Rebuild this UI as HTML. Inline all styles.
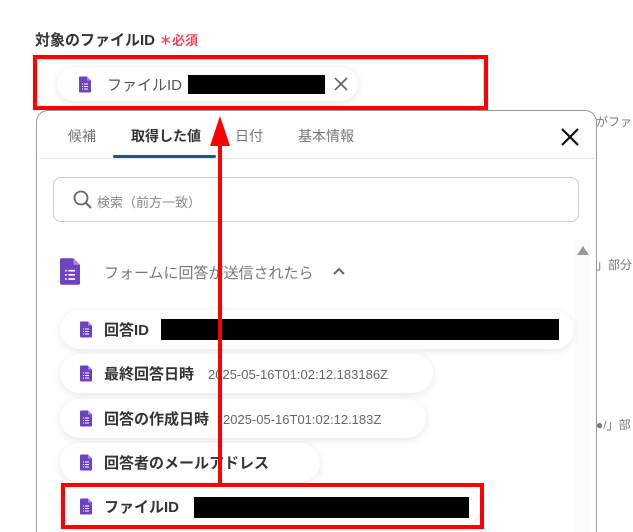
<!DOCTYPE html>
<html><head><meta charset="utf-8"><style>
*{margin:0;padding:0;box-sizing:border-box}
html,body{width:633px;height:532px;overflow:hidden}
body{background:#fff;position:relative;font-family:"Liberation Sans","Noto Sans CJK JP",sans-serif;color:#333}
.a{position:absolute}
.pill{position:absolute;background:#fff;border-radius:22px;box-shadow:0 2px 8px rgba(0,0,0,0.10);height:39px}
.pill .t{position:absolute;left:44px;top:9px;font-size:15px;font-weight:bold;color:#333;white-space:nowrap}
.pill .d{font-weight:normal;color:#666;font-size:13px;margin-left:14px}
.blk{position:absolute;background:#000}
.ic{position:absolute}
.side{position:absolute;left:596px;font-size:12px;color:#777;white-space:nowrap}
</style></head><body>
<svg width="0" height="0" style="position:absolute"><defs>
<symbol id="doc" viewBox="0 0 12 16"><path d="M1 0h7l4 4v11a1 1 0 0 1-1 1H1a1 1 0 0 1-1-1V1a1 1 0 0 1 1-1z" fill="#6f42c1"/><path d="M8 0v4h4z" fill="#a98ae0"/><g fill="#fff"><rect x="3" y="7" width="1" height="1"/><rect x="5" y="7" width="4" height="1"/><rect x="3" y="9.5" width="1" height="1"/><rect x="5" y="9.5" width="4" height="1"/><rect x="3" y="12" width="1" height="1"/><rect x="5" y="12" width="4" height="1"/></g></symbol>
</defs></svg>

<div class="a" style="left:35px;top:29px;font-size:15px;font-weight:bold;color:#333">対象のファイルID <span style="color:#e8455a;font-size:13px">＊必須</span></div>

<div class="a" style="left:37px;top:59px;width:447px;height:48px;border:1px solid #ddd;border-radius:8px"></div>
<div class="pill" style="left:57px;top:67px;width:301px;height:34px;border-radius:17px">
 <svg class="ic" style="left:22px;top:9px" width="12" height="17"><use href="#doc"/></svg>
 <div class="a" style="left:50px;top:7px;font-size:15px;color:#555">ファイルID</div>
 <div class="blk" style="left:131px;top:8px;width:137px;height:19px"></div>
 <svg class="a" style="left:277px;top:10px" width="14" height="14"><path d="M1 1L13 13M13 1L1 13" stroke="#666" stroke-width="1.8"/></svg>
</div>
<div class="a" style="left:33px;top:55px;width:455px;height:55px;border:4px solid #f00"></div>

<div class="a" style="left:36px;top:110px;width:561px;height:422px;border:1px solid #999;border-bottom:none;border-radius:12px 12px 0 0;background:#fff;z-index:-1"></div>
<div class="a" style="left:68px;top:126px;font-size:14px;color:#777">候補</div>
<div class="a" style="left:131px;top:126px;font-size:14px;font-weight:bold;color:#333">取得した値</div>
<div class="a" style="left:235px;top:126px;font-size:14px;color:#777">日付</div>
<div class="a" style="left:298px;top:126px;font-size:14px;color:#777">基本情報</div>
<div class="a" style="left:39px;top:158px;width:555px;height:1px;background:#e2e2e2"></div>
<div class="a" style="left:113px;top:155px;width:103px;height:3px;background:#135e78;border-radius:2px"></div>
<svg class="a" style="left:561px;top:128px" width="18" height="18"><path d="M1 1L17 17M17 1L1 17" stroke="#111" stroke-width="2.2"/></svg>

<div class="a" style="left:53px;top:177px;width:526px;height:45px;border:1px solid #ccc;border-radius:8px"></div>
<svg class="a" style="left:73px;top:190px" width="20" height="20"><circle cx="8" cy="8" r="6.5" fill="none" stroke="#666" stroke-width="1.8"/><path d="M13 13L18 18" stroke="#666" stroke-width="2"/></svg>
<div class="a" style="left:97px;top:192px;font-size:13px;color:#888">検索（前方一致）</div>

<div class="a" style="left:575px;top:240px;width:16px;height:292px;background:#fbfbfb"></div>
<svg class="a" style="left:577px;top:246px" width="12" height="9"><path d="M6 0L12 9H0z" fill="#999"/></svg>

<svg class="ic" style="left:60px;top:258px" width="20" height="27" viewBox="0 0 12 16"><use href="#doc"/></svg>
<div class="a" style="left:104px;top:262px;font-size:15px;color:#777">フォームに回答が送信されたら</div>
<svg class="a" style="left:333px;top:267px" width="12" height="8"><path d="M1 7L6 2L11 7" stroke="#666" stroke-width="2" fill="none"/></svg>

<div class="pill" style="left:60px;top:310px;width:514px"><svg class="ic" style="left:20px;top:11px" width="12" height="17"><use href="#doc"/></svg><div class="t">回答ID</div><div class="blk" style="left:101px;top:9px;width:398px;height:21px"></div></div>
<div class="pill" style="left:60px;top:354px;width:373px"><svg class="ic" style="left:20px;top:11px" width="12" height="17"><use href="#doc"/></svg><div class="t">最終回答日時<span class="d">2025-05-16T01:02:12.183186Z</span></div></div>
<div class="pill" style="left:60px;top:399px;width:366px"><svg class="ic" style="left:20px;top:11px" width="12" height="17"><use href="#doc"/></svg><div class="t">回答の作成日時<span class="d">2025-05-16T01:02:12.183Z</span></div></div>
<div class="pill" style="left:60px;top:443px;width:260px"><svg class="ic" style="left:20px;top:11px" width="12" height="17"><use href="#doc"/></svg><div class="t">回答者のメールアドレス</div></div>
<div class="pill" style="left:60px;top:487px;width:420px;height:40px"><svg class="ic" style="left:20px;top:11px" width="12" height="17"><use href="#doc"/></svg><div class="t">ファイルID</div><div class="blk" style="left:134px;top:10px;width:275px;height:21px"></div></div>
<div class="a" style="left:61px;top:483px;width:423px;height:46px;border:4px solid #f00"></div>

<div class="a" style="left:218px;top:140px;width:4px;height:344px;background:#f00"></div>
<svg class="a" style="left:210px;top:116px" width="20" height="30"><path d="M10 0L20 30H0z" fill="#f00"/></svg>

<div class="side" style="top:113px">がファイ</div>
<div class="side" style="top:256px">」部分</div>
<div class="side" style="top:416px">●/」部</div>
</body></html>
